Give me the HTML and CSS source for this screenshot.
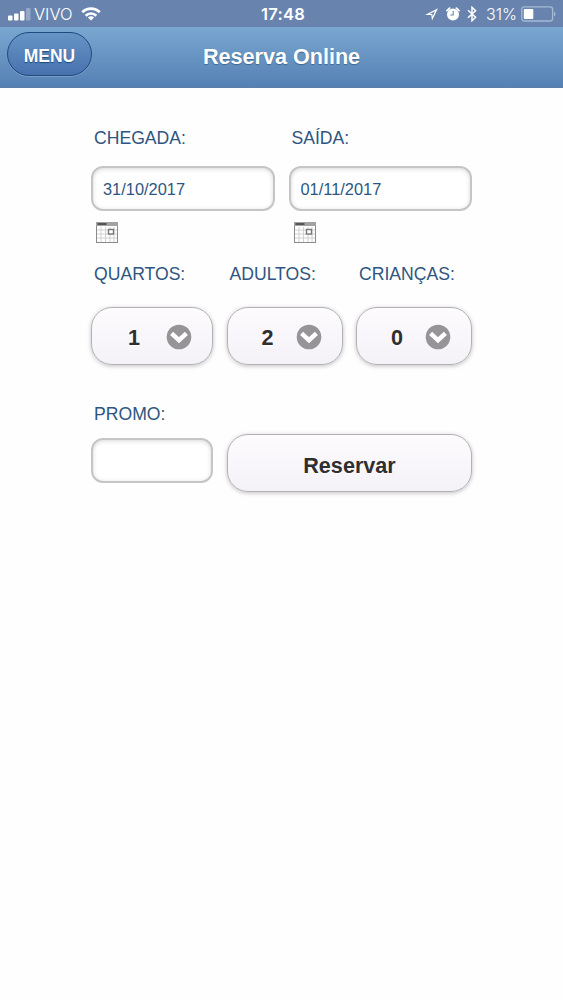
FILE: index.html
```html
<!DOCTYPE html>
<html lang="pt-BR">
<head>
    <meta charset="UTF-8">
    <meta name="viewport" content="width=device-width, initial-scale=1.0">
    <title>Reserva Online</title>
    <link rel="stylesheet" href="styles.css">
</head>
<body>
    <div class="status-bar">
        <div class="status-left">
            <svg class="signal" width="23" height="13" viewBox="0 0 23 13" fill="#fff">
                <rect x="0" y="7.5" width="4.5" height="5" rx="1"/>
                <rect x="6" y="5.5" width="4.5" height="7" rx="1"/>
                <rect x="12" y="3" width="4.5" height="9.5" rx="1"/>
                <rect x="18" y="0" width="4.5" height="12.5" rx="1" opacity="0.3"/>
            </svg>
            <span class="carrier">VIVO</span>
            <svg width="20" height="14" viewBox="0 0 20 14" fill="none" stroke="#fff" stroke-width="2.7">
                <path d="M1.3 5.2a12.2 12.2 0 0 1 17.4 0"/>
                <path d="M4.7 8.7a7.5 7.5 0 0 1 10.6 0"/>
                <path d="M10 13.6L6.9 10.5a4.4 4.4 0 0 1 6.2 0z" fill="#fff" stroke="none"/>
            </svg>
        </div>
        <span class="clock">17:48</span>
        <div class="status-right">
            <svg class="location" width="13" height="13" viewBox="0 0 13 13">
                <path fill="#fff" fill-rule="evenodd" d="M13 .3L0 6.9h6.3l.7 5.6zM10 3.2L7.6 8.6 7.3 5.9H4.6z"/>
            </svg>
            <svg class="alarm" width="14" height="14" viewBox="0 0 14 14">
                <circle cx="7" cy="7.5" r="6" fill="#fff"/>
                <path d="M1 3.6L3.6 1.2M13 3.6L10.4 1.2" stroke="#fff" stroke-width="1.8" stroke-linecap="round"/>
                <path d="M7.2 4v4H4.3" fill="none" stroke="#6884ae" stroke-width="1.1"/>
            </svg>
            <svg class="bluetooth" width="10" height="16" viewBox="0 0 10 16" fill="none" stroke="#fff" stroke-width="1.5">
                <path d="M1 4.3l7.6 7L5 14.7V1.3l3.6 3.4L1 11.7"/>
            </svg>
            <span class="percent">31%</span>
            <svg width="35" height="16" viewBox="0 0 35 16">
                <rect x=".8" y=".8" width="30.8" height="14.2" rx="2.5" fill="none" stroke="#a7b9d6" stroke-width="1.3"/>
                <rect x="2.8" y="2.9" width="9.5" height="10" rx="1" fill="#fff"/>
                <path d="M33 5.5q1.5.6 1.5 2.4T33 10.3z" fill="#a7b9d6"/>
            </svg>
        </div>
    </div>

    <header class="header">
        <button class="menu-btn">MENU</button>
        <h1>Reserva Online</h1>
    </header>

    <form class="booking">
        <div class="row dates">
            <div class="field">
                <label for="chegada">CHEGADA:</label>
                <input type="text" id="chegada" value="31/10/2017">
                <svg class="calendar" width="22" height="21" viewBox="0 0 22 21">
                    <rect x=".5" y=".5" width="21" height="20" fill="#fff" stroke="#8b8b8b"/>
                    <path d="M5 5v15M9.5 5v15M14 5v15M18 5v15M1 8h20M1 12h20M1 16h20" stroke="#d2d0d0"/>
                    <rect x="0" y="0" width="22" height="4" fill="#a3a1a2"/>
                    <path d="M1.5 2h9" stroke="#555" stroke-width="2"/>
                    <rect x="12.5" y="7.5" width="5" height="4.5" fill="#fff" stroke="#777" stroke-width="1.4"/>
                </svg>
            </div>
            <div class="field">
                <label for="saida">SAÍDA:</label>
                <input type="text" id="saida" value="01/11/2017">
                <svg class="calendar" width="22" height="21" viewBox="0 0 22 21">
                    <rect x=".5" y=".5" width="21" height="20" fill="#fff" stroke="#8b8b8b"/>
                    <path d="M5 5v15M9.5 5v15M14 5v15M18 5v15M1 8h20M1 12h20M1 16h20" stroke="#d2d0d0"/>
                    <rect x="0" y="0" width="22" height="4" fill="#a3a1a2"/>
                    <path d="M1.5 2h9" stroke="#555" stroke-width="2"/>
                    <rect x="12.5" y="7.5" width="5" height="4.5" fill="#fff" stroke="#777" stroke-width="1.4"/>
                </svg>
            </div>
        </div>

        <div class="row guests">
            <div class="field">
                <label>QUARTOS:</label>
                <button type="button" class="btn select">
                    <span class="value">1</span>
                    <svg class="arrow" width="26" height="26" viewBox="0 0 26 26">
                        <circle cx="13" cy="13" r="12.3" fill="#969497"/>
                        <path d="M7.2 10.8l5.8 5.4 5.8-5.4" fill="none" stroke="#fff" stroke-width="4.4" stroke-linecap="square"/>
                    </svg>
                </button>
            </div>
            <div class="field">
                <label>ADULTOS:</label>
                <button type="button" class="btn select narrow">
                    <span class="value">2</span>
                    <svg class="arrow" width="26" height="26" viewBox="0 0 26 26">
                        <circle cx="13" cy="13" r="12.3" fill="#969497"/>
                        <path d="M7.2 10.8l5.8 5.4 5.8-5.4" fill="none" stroke="#fff" stroke-width="4.4" stroke-linecap="square"/>
                    </svg>
                </button>
            </div>
            <div class="field">
                <label>CRIANÇAS:</label>
                <button type="button" class="btn select narrow">
                    <span class="value">0</span>
                    <svg class="arrow" width="26" height="26" viewBox="0 0 26 26">
                        <circle cx="13" cy="13" r="12.3" fill="#969497"/>
                        <path d="M7.2 10.8l5.8 5.4 5.8-5.4" fill="none" stroke="#fff" stroke-width="4.4" stroke-linecap="square"/>
                    </svg>
                </button>
            </div>
        </div>

        <div class="row promo">
            <div class="field">
                <label for="promo">PROMO:</label>
                <input type="text" id="promo">
            </div>
            <button type="button" class="btn submit">Reservar</button>
        </div>
    </form>
</body>
</html>
```

FILE: styles.css
```css
* {
    box-sizing: border-box;
}
body {
    margin: 0;
    min-height: 100vh;
    background-color: #fefefe;
    font-family: "Liberation Sans", Arial, sans-serif;
}
svg {
    display: block;
    flex: none;
}

/* status bar */
.status-bar {
    display: grid;
    grid-template-columns: 1fr auto 1fr;
    align-items: center;
    height: 27px;
    padding: 1px 7px 0 8px;
    background-color: #6884ae;
    color: #fff;
    font-family: Inter, "Liberation Sans", sans-serif;
    font-size: 16px;
}
.status-left,
.status-right {
    display: flex;
    align-items: center;
}
.status-right {
    justify-content: flex-end;
}
.carrier {
    margin: 0 8px 0 3px;
    font-size: 16.5px;
    font-weight: 300;
}
.clock {
    margin-left: 2px;
    font-weight: 600;
    font-size: 16.5px;
    letter-spacing: 0.3px;
}
.location {
    margin-right: 8px;
}
.alarm {
    margin-right: 7px;
}
.bluetooth {
    margin-right: 9px;
}
.percent {
    margin-right: 4px;
    font-weight: 300;
}

/* header */
.header {
    display: grid;
    grid-template-columns: 85px 1fr 85px;
    align-items: center;
    height: 61px;
    padding: 0 7px;
    background: linear-gradient(#79a7d1, #5580b4);
    border-bottom: 1px solid #5b7fab;
}
.header h1 {
    margin: 0;
    color: #fff;
    font-size: 21.6px;
    line-height: 26px;
    text-align: center;
    text-shadow: 0 1px 1px #3e6790;
}
.menu-btn {
    height: 44px;
    margin-bottom: 6px;
    padding: 5px 0 0;
    border: 1px solid #1f4b7c;
    border-radius: 22px;
    background: linear-gradient(#6694c6, #4771ad);
    box-shadow: 0 1px 0 rgba(255, 255, 255, 0.2);
    color: #fff;
    font-family: inherit;
    font-size: 17.5px;
    font-weight: bold;
    text-shadow: 0 1px 1px #194b7e;
}

/* booking form */
.booking {
    width: 381px;
    margin: 0 auto;
    padding-top: 40px;
}
.row {
    display: grid;
    column-gap: 14px;
}
.dates {
    grid-template-columns: 1fr 1fr;
}
.guests {
    grid-template-columns: 122px 116px 116px;
    column-gap: 13.5px;
    margin-top: 21px;
}
.promo {
    grid-template-columns: 122px 1fr;
    align-items: end;
    margin-top: 39px;
}
.field {
    display: flex;
    flex-direction: column;
}
.field label {
    padding-left: 3px;
    color: #2e5680;
    font-size: 17.6px;
    line-height: 20px;
}
.field input {
    width: 100%;
    height: 45px;
    margin: 18px 0 0;
    padding: 1px 10px 0;
    border: 2px solid #c6c5c6;
    border-radius: 12px;
    background-color: #fff;
    box-shadow: inset 0 1px 4px rgba(0, 0, 0, 0.16);
    color: #2e5680;
    font-family: inherit;
    font-size: 16.4px;
}
.calendar {
    margin: 11px 0 0 5px;
}
.btn {
    height: 58px;
    border: 1px solid #b3b1b5;
    border-radius: 21px;
    background: linear-gradient(#fdfbfe, #f4f2f6);
    box-shadow: 0 1px 4px rgba(0, 0, 0, 0.25);
    color: #2f2e30;
    font-family: inherit;
    font-size: 21.6px;
    font-weight: bold;
    text-shadow: 0 1px 0 #fff;
}
.select {
    display: flex;
    align-items: center;
    justify-content: flex-end;
    margin-top: 23px;
    padding: 1px 20px 0 0;
}
.value {
    margin-right: 26px;
    padding-top: 2px;
}
.narrow .value {
    margin-right: 22px;
}
.promo input {
    margin: 14px 0 9px;
}
.submit {
    padding-top: 6px;
}
```
